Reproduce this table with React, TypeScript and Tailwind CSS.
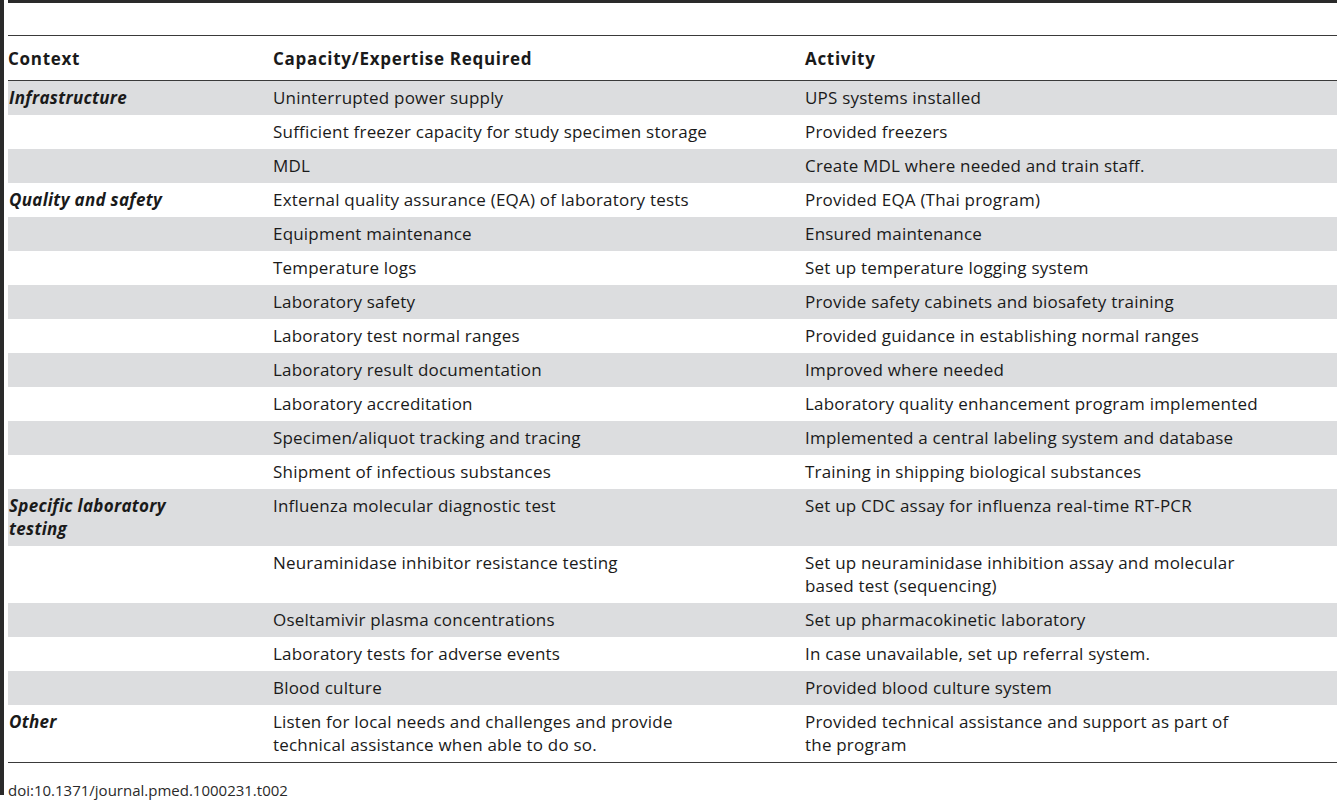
const rows: { ctx?: string[]; cap: string[]; act: string[] }[] = [
  { ctx: ["Infrastructure"], cap: ["Uninterrupted power supply"], act: ["UPS systems installed"] },
  { cap: ["Sufficient freezer capacity for study specimen storage"], act: ["Provided freezers"] },
  { cap: ["MDL"], act: ["Create MDL where needed and train staff."] },
  { ctx: ["Quality and safety"], cap: ["External quality assurance (EQA) of laboratory tests"], act: ["Provided EQA (Thai program)"] },
  { cap: ["Equipment maintenance"], act: ["Ensured maintenance"] },
  { cap: ["Temperature logs"], act: ["Set up temperature logging system"] },
  { cap: ["Laboratory safety"], act: ["Provide safety cabinets and biosafety training"] },
  { cap: ["Laboratory test normal ranges"], act: ["Provided guidance in establishing normal ranges"] },
  { cap: ["Laboratory result documentation"], act: ["Improved where needed"] },
  { cap: ["Laboratory accreditation"], act: ["Laboratory quality enhancement program implemented"] },
  { cap: ["Specimen/aliquot tracking and tracing"], act: ["Implemented a central labeling system and database"] },
  { cap: ["Shipment of infectious substances"], act: ["Training in shipping biological substances"] },
  { ctx: ["Specific laboratory", "testing"], cap: ["Influenza molecular diagnostic test"], act: ["Set up CDC assay for influenza real-time RT-PCR"] },
  { cap: ["Neuraminidase inhibitor resistance testing"], act: ["Set up neuraminidase inhibition assay and molecular", "based test (sequencing)"] },
  { cap: ["Oseltamivir plasma concentrations"], act: ["Set up pharmacokinetic laboratory"] },
  { cap: ["Laboratory tests for adverse events"], act: ["In case unavailable, set up referral system."] },
  { cap: ["Blood culture"], act: ["Provided blood culture system"] },
  { ctx: ["Other"], cap: ["Listen for local needs and challenges and provide", "technical assistance when able to do so."], act: ["Provided technical assistance and support as part of", "the program"] },
];

function Lines({ lines }: { lines: string[] }) {
  return (
    <>
      {lines.map((l, i) => (
        <div key={i} className="whitespace-nowrap">
          {l}
        </div>
      ))}
    </>
  );
}

export default function App() {
  return (
    <div
      className="flex h-[800px] w-[1337px] overflow-hidden bg-white text-[17px] leading-[23px] text-[#1a1a1a]"
      style={{ fontFamily: '"Open Sans", "Liberation Sans", sans-serif' }}
    >
      <div className="h-[795px] w-[4px] shrink-0 bg-[#2a2a2a]" />
      <div className="ml-[4px] flex flex-1 flex-col">
        <div className="h-[3px] bg-[#2a2a2a]" />
        <div className="h-[32px]" />
        <div className="h-[1px] bg-[#3a3a3a]" />
        <div className="grid h-[45px] grid-cols-[265px_532px_1fr] items-center pt-[1px] font-bold tracking-[0.7px]">
          <div>Context</div>
          <div>Capacity/Expertise Required</div>
          <div>Activity</div>
        </div>
        <div className="h-[1px] bg-[#3a3a3a]" />
        {rows.map((r, i) => (
          <div
            key={i}
            className={`grid grid-cols-[265px_532px_1fr] pt-[5px] pb-[6px] tracking-[0.2px] ${i % 2 === 0 ? "bg-[#dcdddf]" : "bg-white"}`}
          >
            <div className="pl-[1px] font-bold italic tracking-[0.3px]">{r.ctx && <Lines lines={r.ctx} />}</div>
            <div>
              <Lines lines={r.cap} />
            </div>
            <div>
              <Lines lines={r.act} />
            </div>
          </div>
        ))}
        <div className="h-[1px] bg-[#3a3a3a]" />
        <div className="mt-[17px] text-[15px] leading-[20px] text-[#2a2a2a]">doi:10.1371/journal.pmed.1000231.t002</div>
      </div>
    </div>
  );
}
